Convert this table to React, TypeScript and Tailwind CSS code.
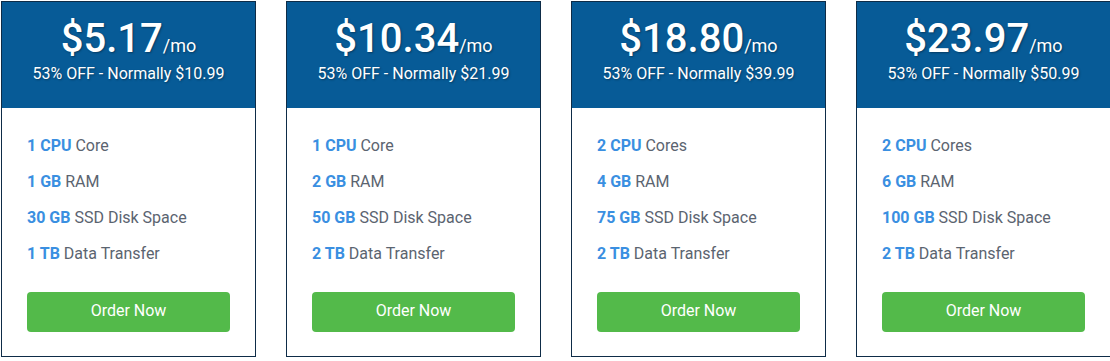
import React from 'react';

type Plan = {
  price: string;
  normal: string;
  specs: { strong: string; rest: string }[];
};

const plans: Plan[] = [
  {
    price: '$5.17',
    normal: '$10.99',
    specs: [
      { strong: '1 CPU', rest: 'Core' },
      { strong: '1 GB', rest: 'RAM' },
      { strong: '30 GB', rest: 'SSD Disk Space' },
      { strong: '1 TB', rest: 'Data Transfer' },
    ],
  },
  {
    price: '$10.34',
    normal: '$21.99',
    specs: [
      { strong: '1 CPU', rest: 'Core' },
      { strong: '2 GB', rest: 'RAM' },
      { strong: '50 GB', rest: 'SSD Disk Space' },
      { strong: '2 TB', rest: 'Data Transfer' },
    ],
  },
  {
    price: '$18.80',
    normal: '$39.99',
    specs: [
      { strong: '2 CPU', rest: 'Cores' },
      { strong: '4 GB', rest: 'RAM' },
      { strong: '75 GB', rest: 'SSD Disk Space' },
      { strong: '2 TB', rest: 'Data Transfer' },
    ],
  },
  {
    price: '$23.97',
    normal: '$50.99',
    specs: [
      { strong: '2 CPU', rest: 'Cores' },
      { strong: '6 GB', rest: 'RAM' },
      { strong: '100 GB', rest: 'SSD Disk Space' },
      { strong: '2 TB', rest: 'Data Transfer' },
    ],
  },
];

const PlanCard = ({ plan }: { plan: Plan }) => (
  <div className="w-[255px] shrink-0 h-[356px] border border-[#0e2c47] bg-white flex flex-col">
    {/* header */}
    <div className="h-[106px] bg-[#075b97] text-white pt-[17px] flex flex-col items-center [text-shadow:1px_1px_2px_rgba(0,0,0,0.35)]">
      <div className="flex items-baseline">
        <span className="text-[40px] leading-none font-medium">{plan.price}</span>
        <span className="text-[18px] leading-none">/mo</span>
      </div>
      <div className="mt-[3px] text-[16px] leading-6">53% OFF - Normally {plan.normal}</div>
    </div>
    {/* specs */}
    <div className="flex flex-col px-[25px] pt-[26px]">
      <ul className="flex flex-col gap-3 text-[16px] leading-6 text-[#5b6470]">
        {plan.specs.map((s, i) => (
          <li key={i}>
            <span className="font-bold text-[#3a8fe1]">{s.strong}</span> {s.rest}
          </li>
        ))}
      </ul>
      <button className="mt-[26px] h-10 w-full rounded bg-[#53ba4a] text-white text-[16px] pb-[3px]">Order Now</button>
    </div>
  </div>
);

export default function App() {
  return (
    <div className="w-[1110px] h-[361px] bg-white pt-px pl-px flex gap-[30px] overflow-hidden font-['Roboto',_'Liberation_Sans',_sans-serif]">
      {plans.map((p, i) => (
        <PlanCard key={i} plan={p} />
      ))}
    </div>
  );
}
